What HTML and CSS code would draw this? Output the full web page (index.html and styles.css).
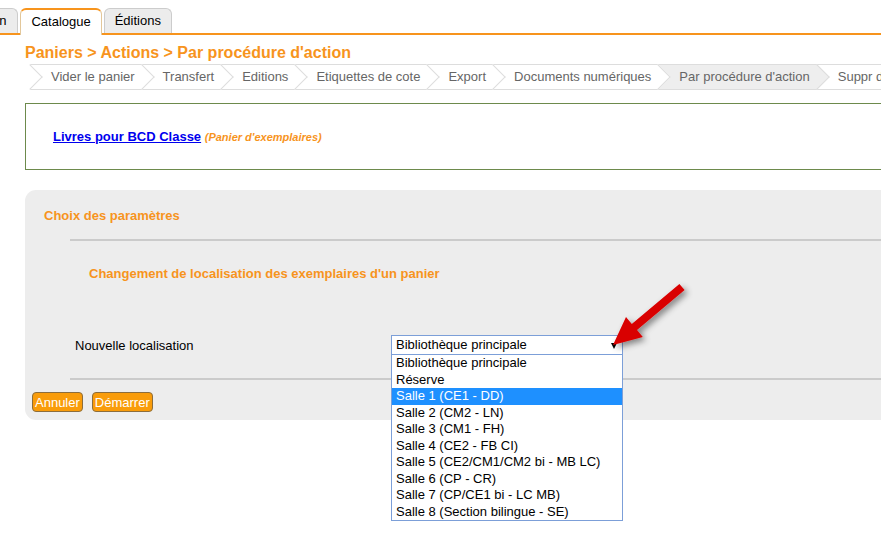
FILE: index.html
```html
<!DOCTYPE html>
<html lang="fr">
<head>
    <meta charset="UTF-8">
    <title>Paniers - Par procédure d'action</title>
    <link rel="stylesheet" href="styles.css">
</head>
<body>
    <div class="tabs">
        <a class="tab">Circulation</a>
        <a class="tab active">Catalogue</a>
        <a class="tab">Éditions</a>
    </div>

    <div class="page">
        <h1>Paniers &gt; Actions &gt; Par procédure d'action</h1>

        <ul class="crumbs">
            <li><span>Vider le panier</span></li>
            <li><span>Transfert</span></li>
            <li><span>Editions</span></li>
            <li><span>Etiquettes de cote</span></li>
            <li><span>Export</span></li>
            <li><span>Documents numériques</span></li>
            <li class="current"><span>Par procédure d'action</span></li>
            <li><span>Suppr des exemplaires</span></li>
        </ul>

        <div class="caddie-box">
            <a href="#" class="caddie-link">Livres pour BCD Classe</a>
            <span class="caddie-type">(Panier d'exemplaires)</span>
        </div>

        <div class="params">
            <h3>Choix des paramètres</h3>
            <div class="params-block">
                <div class="params-title">Changement de localisation des exemplaires d'un panier</div>
                <div class="params-row">
                    <label>Nouvelle localisation</label>
                    <div class="select">
                        <span>Bibliothèque principale</span>
                        <i class="select-caret"></i>
                        <ul class="select-list">
                            <li>Bibliothèque principale</li>
                            <li>Réserve</li>
                            <li class="hover">Salle 1 (CE1 - DD)</li>
                            <li>Salle 2 (CM2 - LN)</li>
                            <li>Salle 3 (CM1 - FH)</li>
                            <li>Salle 4 (CE2 - FB CI)</li>
                            <li>Salle 5 (CE2/CM1/CM2 bi - MB LC)</li>
                            <li>Salle 6 (CP - CR)</li>
                            <li>Salle 7 (CP/CE1 bi - LC MB)</li>
                            <li>Salle 8 (Section bilingue - SE)</li>
                        </ul>
                    </div>
                </div>
            </div>
            <div class="buttons">
                <button class="bouton">Annuler</button>
                <button class="bouton">Démarrer</button>
            </div>
        </div>
    </div>

    <!-- flèche rouge de la capture -->
    <svg class="pointer" width="120" height="110" viewBox="600 270 120 110">
        <defs>
            <filter id="shadow" x="-30%" y="-30%" width="160%" height="160%">
                <feDropShadow dx="3" dy="3" stdDeviation="3" flood-color="#000" flood-opacity="0.45"/>
            </filter>
        </defs>
        <polygon filter="url(#shadow)" fill="#d90000"
            points="684.6,290.1 679.4,283.9 631.8,323.9 626,317 613,345 642.8,337 637,330.1"/>
    </svg>
</body>
</html>
```

FILE: styles.css
```css
:root {
    --orange: #f7941d;
    --border: #dddddd;
    --panel: #ededed;
}

body {
    margin: 0;
    width: 881px;
    height: 540px;
    overflow: hidden;
    position: relative;
    font-family: "Liberation Sans", Arial, sans-serif;
    font-size: 13px;
    color: #000;
    background: #fff;
}

/* onglets du haut */
.tabs {
    display: flex;
    align-items: flex-end;
    height: 26px;
    padding-top: 7px;
    margin-left: -66px;
    border-bottom: 2px solid var(--orange);
    white-space: nowrap;
}

.tab {
    display: block;
    height: 24px;
    line-height: 24px;
    padding: 0 10px;
    margin-right: 2px;
    background: #ececec;
    border: 1px solid #cccccc;
    border-bottom: none;
    border-radius: 6px 6px 0 0;
    color: #000;
}

.tab:first-child {
    padding-right: 11px;
}

.tab.active {
    height: 25px;
    margin-bottom: -2px;
    background: #fff;
    border-color: #e3c79a;
    border-top: 2px solid var(--orange);
}

.page {
    width: 1000px;
    padding-left: 25px;
}

h1 {
    margin: 9px 0 2px;
    font-size: 16px;
    line-height: 18px;
    color: var(--orange);
}

/* fil d'ariane */
.crumbs {
    display: flex;
    list-style: none;
    margin: 0 0 13px 5px;
    padding: 0;
    border-top: 1px solid var(--border);
    border-bottom: 1px solid var(--border);
    white-space: nowrap;
}

.crumbs li {
    position: relative;
    height: 24px;
    line-height: 24px;
    padding: 0 7px 0 21px;
    color: #666;
    background: #fff;
}

.crumbs li span {
    position: relative;
    z-index: 2;
}

.crumbs li::after,
.crumbs li:first-child::before {
    content: '';
    position: absolute;
    top: 3px;
    right: -9px;
    width: 17px;
    height: 17px;
    background: #fff;
    border-top: 1px solid var(--border);
    border-right: 1px solid var(--border);
    transform: rotate(45deg);
    z-index: 1;
}

.crumbs li:first-child::before {
    right: auto;
    left: -9px;
}

.crumbs li.current,
.crumbs li.current::after {
    background: #eeeeee;
}

/* panier */
.caddie-box {
    border: 1px solid #6d8a4c;
    padding: 25px 27px 24px;
    line-height: 16px;
}

.caddie-link {
    color: #0000ee;
    font-weight: bold;
    text-decoration: underline;
}

.caddie-type {
    color: var(--orange);
    font-size: 11px;
    font-weight: bold;
    font-style: italic;
}

/* paramètres */
.params {
    margin-top: 20px;
    padding: 18px 0 8px;
    background: var(--panel);
    border-radius: 11px 0 0 11px;
}

.params h3 {
    margin: 0 0 15px 19px;
    font-size: 13px;
    line-height: 16px;
    color: var(--orange);
}

.params-block {
    margin-left: 45px;
    padding: 25px 0 23px;
    border-top: 2px solid #cbcbcb;
    border-bottom: 2px solid #cbcbcb;
}

.params-title {
    padding-left: 19px;
    font-weight: bold;
    line-height: 16px;
    color: var(--orange);
}

.params-row {
    display: flex;
    align-items: center;
    margin-top: 53px;
    padding-left: 5px;
}

.params-row label {
    width: 316px;
}

.select {
    position: relative;
    box-sizing: border-box;
    width: 232px;
    height: 20px;
    line-height: 18px;
    padding-left: 4px;
    background: #fff;
    border: 1px solid #7c9fd8;
}

.select-caret {
    position: absolute;
    top: 7px;
    left: 219px;
    border-left: 3px solid transparent;
    border-right: 3px solid transparent;
    border-top: 6px solid #000;
}

.select-list {
    position: absolute;
    top: 18px;
    left: -1px;
    box-sizing: border-box;
    width: 232px;
    margin: 0;
    padding: 0;
    list-style: none;
    background: #fff;
    border: 1px solid #7c9fd8;
    z-index: 5;
}

.select-list li {
    height: 16.5px;
    line-height: 16.5px;
    padding-left: 4px;
    white-space: nowrap;
}

.select-list li.hover {
    background: #1e90ff;
    color: #fff;
}

.buttons {
    display: flex;
    gap: 9px;
    margin: 12px 0 0 7px;
}

.bouton {
    height: 20px;
    padding: 0 2px;
    font-family: inherit;
    font-size: 13px;
    color: #fff;
    background: #f99c0a;
    border: 1px solid #8c6d3c;
    border-radius: 4px;
}

.pointer {
    position: absolute;
    left: 600px;
    top: 270px;
    z-index: 10;
}
```
